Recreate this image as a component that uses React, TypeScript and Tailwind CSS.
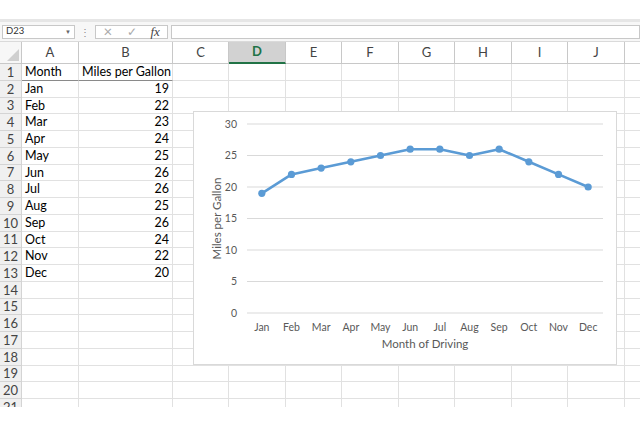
import React from "react";

const cols = [
  { name: "A", w: 57 },
  { name: "B", w: 94 },
  { name: "C", w: 56 },
  { name: "D", w: 57 },
  { name: "E", w: 56 },
  { name: "F", w: 57 },
  { name: "G", w: 56 },
  { name: "H", w: 57 },
  { name: "I", w: 56 },
  { name: "J", w: 57 },
  { name: "", w: 40 },
];

const data: [string, number][] = [
  ["Jan", 19],
  ["Feb", 22],
  ["Mar", 23],
  ["Apr", 24],
  ["May", 25],
  ["Jun", 26],
  ["Jul", 26],
  ["Aug", 25],
  ["Sep", 26],
  ["Oct", 24],
  ["Nov", 22],
  ["Dec", 20],
];

const font = { fontFamily: "Lato, 'Open Sans', sans-serif" };

function Chart() {
  const left = 54;
  const right = 410;
  const step = (right - left) / 12;
  const yFor = (v: number) => 202 - v * 6.3;
  const pts = data.map(([, v], i) => [left + step * (i + 0.5), yFor(v)]);
  return (
    <div className="absolute left-[193px] top-[111px] w-[424px] h-[254px] bg-white border border-[#d9d9d9]">
      <svg width="424" height="254" className="absolute -left-px -top-px" style={font}>
        {[0, 5, 10, 15, 20, 25, 30].map((v) => (
          <g key={v}>
            <line x1={left} x2={right} y1={yFor(v)} y2={yFor(v)} stroke="#d9d9d9" strokeWidth="1" />
            <text x="44" y={yFor(v) + 3.5} fontSize="10.5" fill="#595959" textAnchor="end">
              {v}
            </text>
          </g>
        ))}
        {data.map(([m], i) => (
          <text key={m} x={left + step * (i + 0.5)} y="220" fontSize="10.5" fill="#595959" textAnchor="middle">
            {m}
          </text>
        ))}
        <polyline
          points={pts.map((p) => p.join(",")).join(" ")}
          fill="none"
          stroke="#5b9bd5"
          strokeWidth="2.6"
          strokeLinejoin="round"
        />
        {pts.map(([x, y], i) => (
          <circle key={i} cx={x} cy={y} r="3.6" fill="#5b9bd5" />
        ))}
        <text x="232" y="236.5" fontSize="11.5" fill="#595959" textAnchor="middle">
          Month of Driving
        </text>
        <text
          x="0"
          y="0"
          fontSize="11.5"
          fill="#595959"
          textAnchor="middle"
          transform="translate(28 107.5) rotate(-90)"
        >
          Miles per Gallon
        </text>
      </svg>
    </div>
  );
}

function Row({ n }: { n: number }) {
  const d = n >= 2 && n <= 13 ? data[n - 2] : null;
  return (
    <div className="flex h-[16.75px]">
      <div className="w-[22px] shrink-0 bg-[#f0f0f0] border-b border-r border-[#d4d4d4] flex items-center justify-center pt-[1px] text-[13px] text-[#444] leading-none">
        {n}
      </div>
      {cols.map((c, i) => {
        let content: React.ReactNode = null;
        let extra = "";
        if (n === 1 && i === 0) content = "Month";
        if (n === 1 && i === 1) content = "Miles per Gallon";
        if (d && i === 0) content = d[0];
        if (d && i === 1) content = d[1];
        if (n === 1 && i < 2) extra = "border-b-[#8a8a8a]";
        return (
          <div
            key={i}
            style={{ width: c.w }}
            className={`shrink-0 whitespace-nowrap border-b border-r border-[#e1e1e1] flex items-center pt-[1px] px-[3px] text-[12.5px] text-black leading-none ${
              i === 1 && d ? "justify-end" : ""
            } ${extra}`}
          >
            {content}
          </div>
        );
      })}
    </div>
  );
}

export default function App() {
  return (
    <div className="relative w-[640px] h-[426px] overflow-hidden bg-white" style={font}>
      <div className="h-[19px] bg-white" />
      <div className="h-[3px] bg-[#e6e6e6]" />
      <div className="h-[20px] bg-[#f7f7f7] flex items-center border-b border-[#dadada]">
        <div className="ml-[2px] w-[73px] h-[14px] bg-white border border-[#c8c8c8] flex items-center justify-between px-[3px] text-[9.5px] text-[#333]">
          <span>D23</span>
          <span className="text-[6px] text-[#666]">▼</span>
        </div>
        <div className="w-[20px] flex justify-center text-[10px] text-[#888] leading-none">⋮</div>
        <div className="w-[73px] h-[14px] bg-white border border-[#c8c8c8] flex items-center text-[#aaa]">
          <span className="w-[24px] text-center text-[15px] leading-none">×</span>
          <span className="w-[24px] text-center text-[12px] leading-none">✓</span>
          <span
            className="w-[24px] text-center text-[13px] italic text-[#444] leading-none"
            style={{ fontFamily: "'Liberation Serif', serif" }}
          >
            fx
          </span>
        </div>
        <div className="ml-[3px] flex-1 h-[14px] bg-white border border-[#c8c8c8]" />
      </div>
      <div className="flex h-[22px] bg-white">
        <div className="w-[22px] shrink-0 border-b border-r border-[#c8c8c8] bg-[#f7f7f7] relative">
          <div
            className="absolute right-[2px] bottom-[2px] w-[12px] h-[12px] bg-[#cfcfcf]"
            style={{ clipPath: "polygon(100% 0, 100% 100%, 0 100%)" }}
          />
        </div>
        {cols.map((c, i) => (
          <div
            key={i}
            style={{ width: c.w }}
            className={`shrink-0 flex items-center justify-center text-[13px] border-r ${
              c.name === "D"
                ? "bg-[#d2d2d2] border-b-2 border-b-[#217346] text-[#217346] font-bold border-r-[#c8c8c8]"
                : "border-b border-[#c8c8c8] text-[#444]"
            }`}
          >
            {c.name}
          </div>
        ))}
      </div>
      <div className="h-[343px] overflow-hidden">
        {Array.from({ length: 21 }, (_, k) => (
          <Row key={k} n={k + 1} />
        ))}
      </div>
      <Chart />
    </div>
  );
}
